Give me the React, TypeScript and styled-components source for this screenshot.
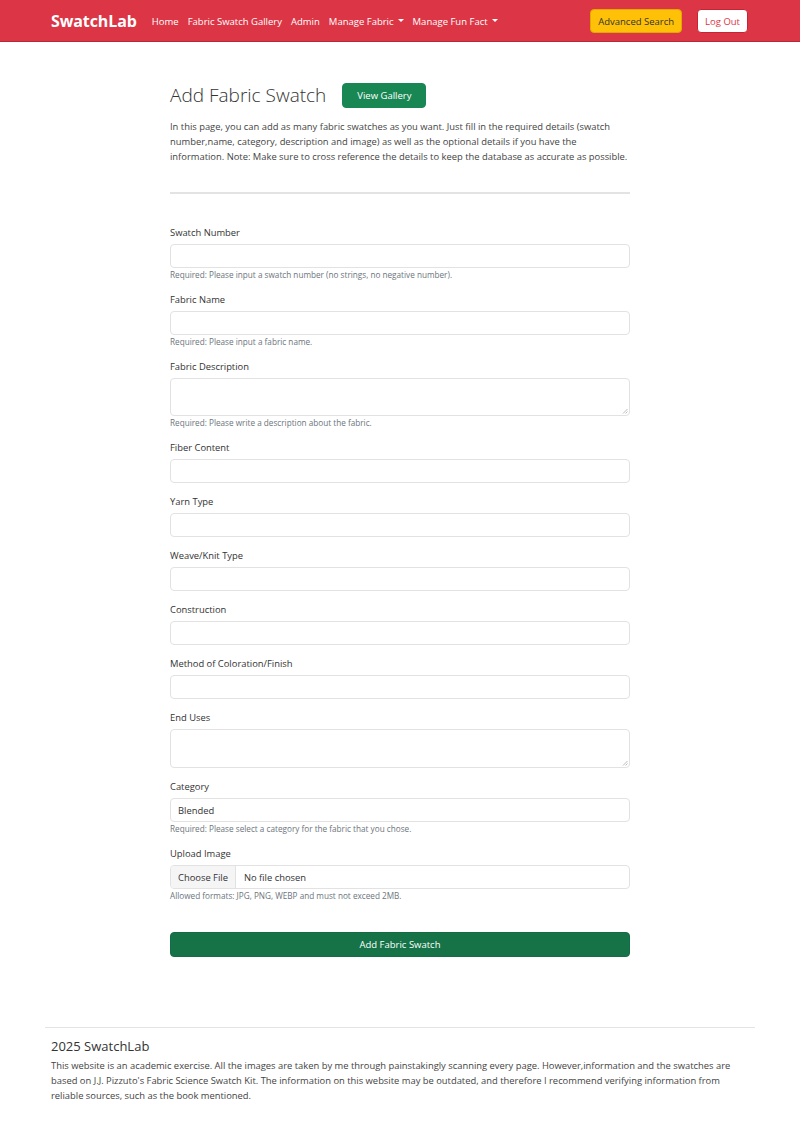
import React from "react";
import styled, { createGlobalStyle } from "styled-components";

const Global = createGlobalStyle`
  html, body { margin: 0; padding: 0; background: #fff; }
  body { font-family: "Open Sans", "Noto Sans", Arial, sans-serif; color: #333; }
  * { box-sizing: border-box; }
`;

const Navbar = styled.nav`
  height: 42px;
  background: #dc3545;
  border-bottom: 1px solid #b42b38;
  display: flex;
  align-items: center;
  padding: 1px 52px 0 51px;
`;

const Brand = styled.a`
  font-size: 16px;
  font-weight: 700;
  color: #fff;
  margin-right: 15px;
  letter-spacing: -0.1px;
`;

const NavList = styled.div`
  display: flex;
  align-items: center;
  gap: 9px;
  flex: 1;
`;

const NavLink = styled.a`
  color: #fff;
  font-size: 9.5px;
  display: flex;
  align-items: center;
  gap: 4px;
`;

const Caret = styled.span`
  width: 0;
  height: 0;
  border-left: 3px solid transparent;
  border-right: 3px solid transparent;
  border-top: 3px solid #fff;
  display: inline-block;
  margin-top: -1px;
`;

const NavButton = styled.button<{ $variant: "warning" | "light" }>`
  height: 24px;
  font-family: inherit;
  font-size: 9.5px;
  border-radius: 4px;
  padding: 0 7px;
  cursor: pointer;
  background: ${(p) => (p.$variant === "warning" ? "#ffc107" : "#fff")};
  color: ${(p) => (p.$variant === "warning" ? "#333" : "#dc3545")};
  border: 1px solid ${(p) => (p.$variant === "warning" ? "#e0a800" : "#c82333")};
  margin-left: ${(p) => (p.$variant === "light" ? "15px" : "0")};
`;

const Main = styled.main`
  width: 460px;
  margin: 0 auto;
  padding-top: 40px;
`;

const TitleRow = styled.div`
  display: flex;
  align-items: center;
  gap: 16px;
`;

const Title = styled.h1`
  font-size: 19px;
  font-weight: 300;
  margin: 0;
  color: #333;
`;

const GreenButton = styled.button<{ $block?: boolean }>`
  background: ${(p) => (p.$block ? "#157347" : "#198754")};
  color: #fff;
  border: 1px solid ${(p) => (p.$block ? "#146c43" : "#198754")};
  border-radius: 4px;
  font-family: inherit;
  font-size: 9.5px;
  height: 25px;
  padding: 0 14px;
  width: ${(p) => (p.$block ? "100%" : "auto")};
  cursor: pointer;
`;

const Intro = styled.p`
  font-size: 9.4px;
  line-height: 15px;
  color: #444;
  margin: 11px 0 0;
`;

const Divider = styled.hr`
  border: 0;
  border-top: 2px solid #e3e3e3;
  margin: 28px 0 31px;
`;

const Field = styled.div`
  margin-bottom: 11px;
`;

const Label = styled.label`
  display: block;
  font-size: 9.4px;
  line-height: 15px;
  margin-bottom: 4px;
  color: #333;
`;

const Input = styled.div<{ $tall?: number }>`
  height: ${(p) => p.$tall ?? 24}px;
  border: 1px solid #e2e2e2;
  border-radius: 4px;
  background: #fff;
  display: flex;
  align-items: center;
  font-size: 9.4px;
  color: #333;
  position: relative;
  overflow: hidden;
`;

const InputText = styled.span`
  padding-left: 7px;
`;

const FileButton = styled.span`
  height: 100%;
  display: flex;
  align-items: center;
  padding: 0 7px;
  background: #f5f5f6;
  border-right: 1px solid #e2e2e2;
  margin-right: 1px;
`;

const Grip = styled.svg`
  position: absolute;
  right: 1px;
  bottom: 1px;
`;

const Help = styled.div`
  font-size: 8.2px;
  line-height: 13px;
  color: #6c757d;
`;

const SubmitWrap = styled.div`
  margin-top: 29px;
`;

const Footer = styled.footer`
  margin: 70px 45px 0;
  border-top: 1px solid #e3e3e3;
  padding: 9px 6px 28px;
`;

const FooterTitle = styled.div`
  font-size: 13px;
  line-height: 18px;
  color: #333;
  margin-bottom: 3px;
`;

const FooterText = styled.p`
  font-size: 9.4px;
  line-height: 15px;
  margin: 0;
  color: #444;
`;

const ResizeGrip = () => (
  <Grip width="6" height="6" viewBox="0 0 6 6">
    <path d="M5.5 1 L1 5.5 M5.5 3.5 L3.5 5.5" stroke="#aaa" strokeWidth="0.8" />
  </Grip>
);

type F = { label: string; help?: string; tall?: number; value?: string; file?: boolean };

const fields: F[] = [
  { label: "Swatch Number", help: "Required: Please input a swatch number (no strings, no negative number)." },
  { label: "Fabric Name", help: "Required: Please input a fabric name." },
  { label: "Fabric Description", help: "Required: Please write a description about the fabric.", tall: 38 },
  { label: "Fiber Content" },
  { label: "Yarn Type" },
  { label: "Weave/Knit Type" },
  { label: "Construction" },
  { label: "Method of Coloration/Finish" },
  { label: "End Uses", tall: 39 },
  { label: "Category", help: "Required: Please select a category for the fabric that you chose.", value: "Blended" },
  { label: "Upload Image", help: "Allowed formats: JPG, PNG, WEBP and must not exceed 2MB.", file: true },
];

export default function App() {
  return (
    <>
      <Global />
      <Navbar>
        <Brand>SwatchLab</Brand>
        <NavList>
          <NavLink>Home</NavLink>
          <NavLink>Fabric Swatch Gallery</NavLink>
          <NavLink>Admin</NavLink>
          <NavLink>
            Manage Fabric <Caret />
          </NavLink>
          <NavLink>
            Manage Fun Fact <Caret />
          </NavLink>
        </NavList>
        <NavButton $variant="warning">Advanced Search</NavButton>
        <NavButton $variant="light">Log Out</NavButton>
      </Navbar>
      <Main>
        <TitleRow>
          <Title>Add Fabric Swatch</Title>
          <GreenButton>View Gallery</GreenButton>
        </TitleRow>
        <Intro>
          In this page, you can add as many fabric swatches as you want. Just fill in the required details (swatch
          number,name, category, description and image) as well as the optional details if you have the
          information. Note: Make sure to cross reference the details to keep the database as accurate as possible.
        </Intro>
        <Divider />
        {fields.map((f) => (
          <Field key={f.label}>
            <Label>{f.label}</Label>
            <Input $tall={f.tall}>
              {f.file && <FileButton>Choose File</FileButton>}
              {f.file && <InputText>No file chosen</InputText>}
              {f.value && <InputText>{f.value}</InputText>}
              {f.tall && <ResizeGrip />}
            </Input>
            {f.help && <Help>{f.help}</Help>}
          </Field>
        ))}
        <SubmitWrap>
          <GreenButton $block>Add Fabric Swatch</GreenButton>
        </SubmitWrap>
      </Main>
      <Footer>
        <FooterTitle>2025 SwatchLab</FooterTitle>
        <FooterText>
          This website is an academic exercise. All the images are taken by me through painstakingly scanning every
          page. However,information and the swatches are based on J.J. Pizzuto's Fabric Science Swatch Kit. The
          information on this website may be outdated, and therefore I recommend verifying information from reliable
          sources, such as the book mentioned.
        </FooterText>
      </Footer>
    </>
  );
}
